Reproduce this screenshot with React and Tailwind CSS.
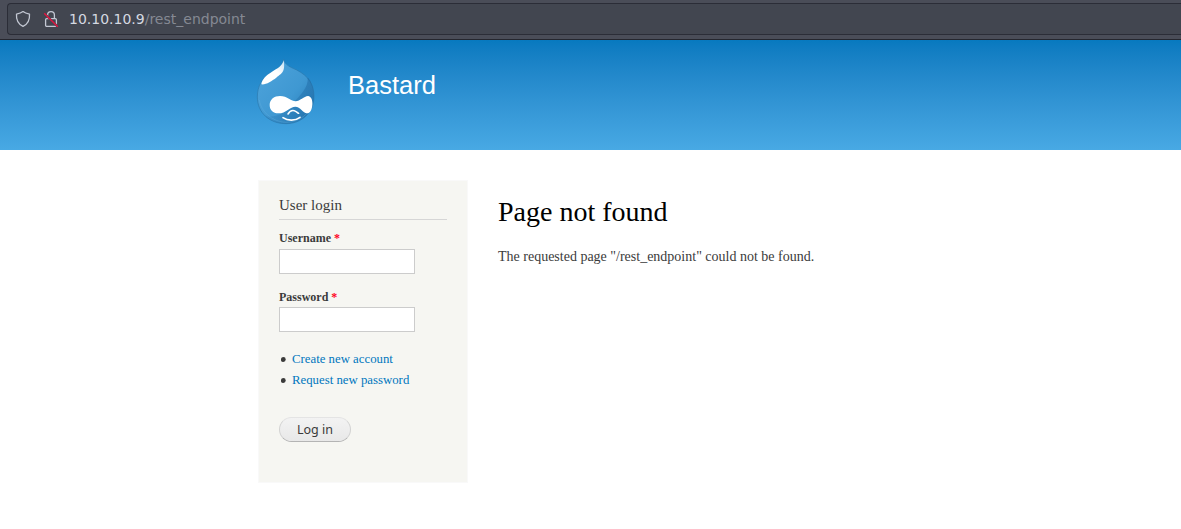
function ShieldIcon() {
  return (
    <svg width="16" height="18" viewBox="0 0 16 18" fill="none" stroke="#c3c8d3" strokeWidth="1.3" strokeLinejoin="round">
      <path d="M8 1.6 C6.3 3 4 3.7 1.5 4.1 C1.1 9.5 3 14 8 16.4 C13 14 14.9 9.5 14.5 4.1 C12 3.7 9.7 3 8 1.6 Z" />
    </svg>
  );
}

function InsecureIcon() {
  return (
    <svg width="16" height="18" viewBox="0 0 16 18" fill="none">
      <rect x="2.6" y="8.6" width="10.8" height="7.8" rx="1.2" stroke="#c3c8d3" strokeWidth="1.3" />
      <path d="M4.6 8.4 V5 a3.4 3.4 0 0 1 6.8 0 V8.4" stroke="#c3c8d3" strokeWidth="1.3" />
      <path d="M1.2 3.2 L14.8 16.8" stroke="#424650" strokeWidth="2.2" />
      <path d="M1.2 3.2 L14.8 16.8" stroke="#e0143f" strokeWidth="1.5" />
    </svg>
  );
}

function Logo() {
  return (
    <svg width="75" height="80" viewBox="0 0 225 240" fill="none">
      <defs>
        <linearGradient id="drop" x1="0.1" y1="0.2" x2="0.85" y2="0.9">
          <stop offset="0" stopColor="#4ba1d9" />
          <stop offset="0.6" stopColor="#3f98d2" />
          <stop offset="1" stopColor="#2b80bb" />
        </linearGradient>
        <linearGradient id="shine" x1="0.9" y1="0.1" x2="0.2" y2="0.9">
          <stop offset="0" stopColor="#d3e8f6" />
          <stop offset="0.4" stopColor="#ffffff" />
          <stop offset="1" stopColor="#ffffff" />
        </linearGradient>
        <linearGradient id="shade" x1="1" y1="0" x2="0" y2="1">
          <stop offset="0" stopColor="#1d67a2" stopOpacity="0.5" />
          <stop offset="1" stopColor="#1d67a2" stopOpacity="0.15" />
        </linearGradient>
      </defs>
      <path d="M101 28 C105 45 120 51 140 60 C176 78 192 105 192 139 C192 188 155 221 108 221 C58 221 22 188 22 141 C22 108 37 83 61 70 C82 58 97 49 101 28 Z" fill="url(#drop)" stroke="#2a78ae" strokeWidth="2" />
      <path d="M173 82 C185 95 192 114 192 139 C192 188 155 221 108 221 C82 221 60 212 45 198 C78 205 106 190 130 160 C148 136 176 116 173 82 Z" fill="url(#shade)" />
      <path d="M28 150 C32 184 67 216 108 217 C148 217 181 190 187 158" stroke="#66b2df" strokeWidth="2" opacity="0.5" />
      <path d="M101 31 C97 48 82 56 66 65 C48 76 36 88 34 103 C48 105 65 93 79 83 C94 71 107 67 101 31 Z" fill="url(#shine)" />
      <path d="M59 165 C59 148 73 138 90 138 C112 138 124 154 137 154 C150 153 162 139 174 138 C184 139 188 151 187 164 C186 179 180 190 171 190 C159 189 151 170 136 170 C121 170 108 190 85 190 C69 190 59 180 59 165 Z" fill="#fff" />
      <path d="M114 192 C120 182 129 180 137 184 C141 186 142 188 146 190" stroke="#fff" strokeWidth="4.5" strokeLinecap="round" />
      <path d="M99 203 C113 213 136 213 150 202" stroke="#fff" strokeWidth="5" strokeLinecap="round" />
    </svg>
  );
}

function Field({ label, type, inputClass }) {
  return (
    <label className="block text-[12px] leading-[18px] font-bold text-[#3b3b3b]">
      {label} <span className="text-[#ff0022]">*</span>
      <input type={type} className={`${inputClass} block h-[25px] w-[136px] border border-[#cccccc] bg-white px-1 font-normal outline-none`} />
    </label>
  );
}

export default function App() {
  return (
    <div className="h-[529px] w-[1181px] overflow-hidden bg-white font-['Liberation_Serif',serif]">
      <div className="h-10 border-b border-[#25262e] bg-[#4a4d58] pt-[3px] pl-[7px]">
        <div className="flex h-8 items-center rounded-l-[4px] border border-r-0 border-[#2b2d37] bg-[#424650] pl-[7px] font-['DejaVu_Sans',sans-serif] text-[14px]">
          <ShieldIcon />
          <span className="ml-3 block"><InsecureIcon /></span>
          <span className="ml-[10px] text-[#d5d9e1]">10.10.10.9<span className="text-[#858993]">/rest_endpoint</span></span>
        </div>
      </div>
      <header className="flex h-[110px] bg-linear-to-b from-[#0779bf] to-[#48a9e4] pt-[10px] pl-[250px]">
        <Logo />
        <h1 className="mt-5 ml-[23px] font-['Liberation_Sans',sans-serif] text-[25.5px] leading-[30px] text-white">Bastard</h1>
      </header>
      <main className="flex pt-[30px] pl-[258px]">
        <aside className="h-[303px] w-[210px] border border-[#f9f9f9] bg-[#f6f6f2] px-5 pt-[14px]">
          <h2 className="h-[25px] border-b border-[#d6d6d6] text-[15px] leading-5 text-[#3b3b3b]">User login</h2>
          <form className="pt-[9px]">
            <Field label="Username" type="text" inputClass="mt-[2px]" />
            <div className="h-[14px]" />
            <Field label="Password" type="password" inputClass="mt-px" />
            <ul className="mt-[17px] text-[12.8px] leading-[21px] text-[#0077be]">
              {["Create new account", "Request new password"].map((text) => (
                <li key={text} className="flex items-center">
                  <svg className="mr-[6px] mb-px ml-[2px]" width="5" height="5" viewBox="0 0 5 5">
                    <circle cx="2.3" cy="2.5" r="2.4" fill="#3b3b3b" />
                  </svg>
                  {text}
                </li>
              ))}
            </ul>
            <button type="button" className="mt-[26px] block h-[25px] w-[72px] rounded-full border border-[#e4e4e4] border-r-[#d2d2d2] border-b-[#b4b4b4] border-l-[#d2d2d2] bg-linear-to-b from-[#f3f3f3] to-[#e8e8e8] font-['Noto_Sans',sans-serif] text-[12.5px] leading-[22px] text-[#3a3a3a]">Log in</button>
          </form>
        </aside>
        <section className="pt-[14px] pl-[30px]">
          <h2 className="text-[28px] leading-9 text-black">Page not found</h2>
          <p className="mt-4 text-[14px] leading-[21px] text-[#3b3b3b]">The requested page "/rest_endpoint" could not be found.</p>
        </section>
      </main>
    </div>
  );
}
